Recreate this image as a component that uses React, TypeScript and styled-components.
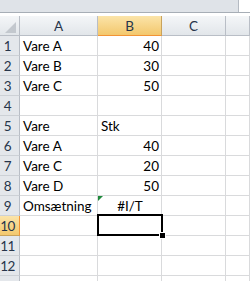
import React from "react";
import styled, { createGlobalStyle, css } from "styled-components";

const GlobalStyle = createGlobalStyle`
  html, body {
    margin: 0;
    padding: 0;
    background: #ffffff;
    overflow: hidden;
  }
  body {
    font-family: Lato, "Liberation Sans", sans-serif;
  }
`;

const colors = {
  grid: "#d9dadc",
  headerBg: "linear-gradient(to bottom, #f4f6f8 0%, #e2e6ea 100%)",
  headerLine: "#b9bec6",
  headerText: "#27354a",
  selBg: "linear-gradient(to bottom, #fbe4a9 0%, #f3c86d 100%)",
  selLine: "#f29436",
  strip: "#dfe3e8",
  stripLine: "#a7aeb6",
};

const Sheet = styled.div`
  width: 250px;
  height: 281px;
  overflow: hidden;
  background: #ffffff;
`;

const TopArea = styled.div`
  display: flex;
  height: 12px;
  border-bottom: 1px solid ${colors.stripLine};
  margin-bottom: 3px;
`;

const FormulaStrip = styled.div`
  width: 238px;
  height: 100%;
  background: ${colors.strip};
  border-right: 1px solid #b4bac2;
`;

const Grid = styled.div`
  display: grid;
  grid-template-columns: 20px 78px 64px 64px 1fr;
  grid-auto-rows: 20px;
  font-size: 13.5px;
`;

const Corner = styled.div`
  background: ${colors.headerBg};
  border-right: 1px solid ${colors.headerLine};
  border-bottom: 1px solid ${colors.headerLine};
  display: flex;
  justify-content: flex-end;
  align-items: flex-end;
  padding: 0 3px 2px 0;
`;

const CornerMark = styled.span`
  width: 0;
  height: 0;
  border-left: 11px solid transparent;
  border-bottom: 11px solid #c3c8ce;
`;

const ColHeader = styled.div<{ $selected?: boolean }>`
  background: ${colors.headerBg};
  border-right: 1px solid ${colors.headerLine};
  border-bottom: 1px solid ${colors.headerLine};
  color: ${colors.headerText};
  display: flex;
  align-items: flex-end;
  justify-content: center;
  line-height: 18px;
  ${(p) =>
    p.$selected &&
    css`
      background: ${colors.selBg};
      border-right-color: #c9a35c;
      border-bottom-color: ${colors.selLine};
    `}
`;

const RowHeader = styled.div<{ $selected?: boolean }>`
  background: #e4e7eb;
  border-right: 1px solid ${colors.headerLine};
  border-bottom: 1px solid #cdd1d6;
  color: ${colors.headerText};
  display: flex;
  align-items: flex-end;
  justify-content: center;
  padding-right: 4px;
  line-height: 18px;
  letter-spacing: -0.5px;
  ${(p) =>
    p.$selected &&
    css`
      background: ${colors.selBg};
      border-right-color: ${colors.selLine};
      border-bottom-color: #c9a35c;
    `}
`;

const Cell = styled.div<{ $align?: "left" | "right" | "center"; $error?: boolean; $active?: boolean }>`
  position: relative;
  border-right: 1px solid ${colors.grid};
  border-bottom: 1px solid ${colors.grid};
  color: #000000;
  display: flex;
  align-items: flex-end;
  justify-content: ${(p) =>
    p.$align === "right" ? "flex-end" : p.$align === "center" ? "center" : "flex-start"};
  padding: 0 2px 0 3px;
  line-height: 18px;
  white-space: nowrap;
  overflow: visible;

  ${(p) =>
    p.$error &&
    css`
      &::before {
        content: "";
        position: absolute;
        top: 0;
        left: 0;
        border-top: 5px solid #1f8a3c;
        border-right: 5px solid transparent;
      }
    `}

  ${(p) =>
    p.$active &&
    css`
      &::after {
        content: "";
        position: absolute;
        top: -2px;
        left: -1px;
        right: -2px;
        bottom: -1px;
        border: 2px solid #000000;
        z-index: 2;
      }
    `}
`;

const FillHandle = styled.span`
  position: absolute;
  right: -5px;
  bottom: -4px;
  width: 5px;
  height: 5px;
  background: #000000;
  border: 1px solid #ffffff;
  z-index: 3;
`;

type Row = { a?: string; b?: string; bAlign?: "left" | "right" | "center"; error?: boolean; active?: boolean };

const rows: Row[] = [
  { a: "Vare A", b: "40" },
  { a: "Vare B", b: "30" },
  { a: "Vare C", b: "50" },
  {},
  { a: "Vare", b: "Stk", bAlign: "left" },
  { a: "Vare A", b: "40" },
  { a: "Vare C", b: "20" },
  { a: "Vare D", b: "50" },
  { a: "Omsætning", b: "#I/T", bAlign: "center", error: true },
  { active: true },
  {},
  {},
];

export default function App() {
  return (
    <>
      <GlobalStyle />
      <Sheet>
        <TopArea>
          <FormulaStrip />
        </TopArea>
        <Grid>
          <Corner>
            <CornerMark />
          </Corner>
          <ColHeader>A</ColHeader>
          <ColHeader $selected>B</ColHeader>
          <ColHeader>C</ColHeader>
          <ColHeader />
          {rows.map((r, i) => (
            <React.Fragment key={i}>
              <RowHeader $selected={r.active}>{i + 1}</RowHeader>
              <Cell>{r.a}</Cell>
              <Cell $align={r.bAlign ?? "right"} $error={r.error} $active={r.active}>
                {r.b}
                {r.active && <FillHandle />}
              </Cell>
              <Cell />
              <Cell />
            </React.Fragment>
          ))}
          {/* partly visible row below the fold: grid lines only */}
          <RowHeader />
          <Cell />
          <Cell />
          <Cell />
          <Cell />
        </Grid>
      </Sheet>
    </>
  );
}
